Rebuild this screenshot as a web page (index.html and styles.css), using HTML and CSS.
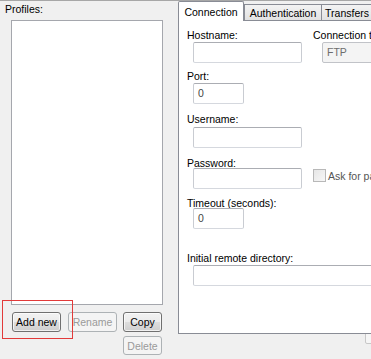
FILE: index.html
```html
<!DOCTYPE html>
<html>
<head>
<meta charset="utf-8">
<link rel="stylesheet" href="styles.css">
</head>
<body>
<div class="window">
  <div class="left">
    <div class="label profiles">Profiles:</div>
    <div class="listbox"></div>
    <div class="btnrow">
      <button class="btn add">Add new</button>
      <button class="btn rename" disabled>Rename</button>
      <button class="btn copy">Copy</button>
    </div>
    <div class="btnrow2">
      <button class="btn del" disabled>Delete</button>
    </div>
    <div class="highlight"></div>
  </div>
  <div class="right">
    <div class="tabs">
      <div class="tab sel t-conn">Connection</div>
      <div class="tab t-auth">Authentication</div>
      <div class="tab t-trans">Transfers</div>
    </div>
    <div class="panel">
      <div class="row1">
        <div class="field f-host">
          <div class="label">Hostname:</div>
          <div class="input w-long"></div>
        </div>
        <div class="field f-type">
          <div class="label">Connection type:</div>
          <div class="combo">FTP</div>
        </div>
      </div>
      <div class="field f-port">
        <div class="label">Port:</div>
        <div class="input w-short">0</div>
      </div>
      <div class="field f-user">
        <div class="label">Username:</div>
        <div class="input w-long"></div>
      </div>
      <div class="row1 pwrow">
        <div class="field f-pass">
          <div class="label">Password:</div>
          <div class="input w-long"></div>
        </div>
        <div class="check">
          <span class="box"></span><span class="label">Ask for password</span>
        </div>
      </div>
      <div class="field f-timeout">
        <div class="label">Timeout (seconds):</div>
        <div class="input w-short">0</div>
      </div>
      <div class="field f-dir">
        <div class="label">Initial remote directory:</div>
        <div class="input w-dir"></div>
      </div>
    </div>
    <div class="grip"></div>
  </div>
</div>
</body>
</html>
```

FILE: styles.css
```css
* { box-sizing: border-box; }
html, body { margin: 0; padding: 0; }
body {
  width: 371px;
  height: 359px;
  overflow: hidden;
  background: #f0f0f0;
  font-family: "Liberation Sans", Arial, sans-serif;
  font-size: 10.5px;
  color: #000;
}
.window {
  display: flex;
  width: 371px;
  height: 359px;
  border-top: 1px solid #a7a7a7;
  position: relative;
}
.label { line-height: 12px; height: 12px; white-space: nowrap; }

/* left column */
.left {
  width: 178px;
  flex: none;
  display: flex;
  flex-direction: column;
  padding-top: 2px;
}
.profiles { margin-left: 5px; }
.listbox {
  margin: 5px 0 0 11px;
  width: 152px;
  height: 285px;
  background: #fff;
  border: 1px solid #a5a7ad;
}
.btnrow { display: flex; margin-top: 7px; padding-left: 12px; }
.btnrow2 { display: flex; margin-top: 4px; padding-left: 123px; }
.btn {
  font-family: inherit;
  font-size: 10.5px;
  height: 20px;
  padding: 0;
  border: 1px solid #707070;
  border-radius: 3px;
  background: linear-gradient(#f2f2f2 0%, #ebebeb 50%, #dddddd 51%, #cfcfcf 100%);
  color: #000;
  box-shadow: inset 0 0 0 1px rgba(255,255,255,0.7);
}
.btn[disabled] {
  border-color: #adb2b5;
  background: #f4f4f4;
  color: #9a9a9a;
  box-shadow: none;
}
.add { width: 49px; }
.rename { width: 49px; margin-left: 7px; }
.copy { width: 39px; margin-left: 6px; }
.del { width: 39px; height: 19px; }
.highlight {
  position: absolute;
  left: 2px;
  top: 299px;
  width: 71px;
  height: 39px;
  border: 1px solid #e23a3a;
}

/* right column */
.right {
  flex: 1;
  min-width: 0;
  position: relative;
}
.tabs {
  display: flex;
  align-items: flex-end;
  height: 19px;
  position: relative;
  z-index: 2;
}
.tab {
  height: 16px;
  border: 1px solid #898c95;
  border-bottom: none;
  background: linear-gradient(#f3f3f3, #e2e2e2);
  text-align: center;
  line-height: 14px;
  padding-top: 1px;
  white-space: nowrap;
  flex: none;
  margin-left: -1px;
}
.tab.sel {
  height: 20px;
  margin-bottom: -1px;
  margin-left: 0;
  background: #fff;
  line-height: 12px;
  padding-top: 4px;
  border-radius: 2px 2px 0 0;
}
.t-conn { width: 66px; }
.t-auth { width: 78px; margin-left: 0; }
.t-trans { width: 52px; }
.panel {
  width: 260px;
  height: 314px;
  background: #fff;
  border: 1px solid #898c95;
  border-right: none;
  padding: 8px 0 0 8px;
  position: relative;
  z-index: 1;
}
.row1 { display: grid; grid-template-columns: 126px auto; }
.field { display: flex; flex-direction: column; }
.input, .combo {
  height: 21px;
  margin-left: 6px;
  border: 1px solid #abadb3;
  border-color: #abadb3 #c9ccd2 #d5d8de #c9ccd2;
  border-radius: 2px;
  background: #fff;
  color: #444;
  line-height: 19px;
  padding-left: 4px;
  font-size: 10.5px;
}
.w-long { width: 109px; }
.w-short { width: 51px; }
.w-dir { width: 240px; }
.combo {
  margin-left: 9px;
  width: 120px;
  background: #f4f4f4;
  border-color: #c1c3c8;
  color: #6d6d6d;
}
.f-host .input, .f-type .combo { margin-top: 1px; }
.f-port { margin-top: 7px; }
.f-port .input { margin-top: 1px; }
.f-user { margin-top: 9px; }
.f-user .input { margin-top: 2px; }
.pwrow { margin-top: 9px; }
.f-pass .input { margin-top: -1px; }
.check { display: flex; align-items: flex-start; padding-top: 12px; }
.check .box {
  width: 13px;
  height: 13px;
  border: 1px solid #b8b8b8;
  background: linear-gradient(135deg, #e6e6e6, #f7f7f7);
  flex: none;
}
.check .label { margin-left: 2px; margin-top: 1px; color: #555; }
.f-timeout { margin-top: 8px; }
.f-timeout .input { margin-top: -1px; }
.f-dir { margin-top: 23px; }
.f-dir .input { margin-top: 1px; }
.grip {
  position: absolute;
  left: 187px;
  top: 327px;
  width: 10px;
  height: 16px;
  border: 1px solid #c8c8c8;
  border-radius: 2px;
  background: #f6f6f6;
}
```
